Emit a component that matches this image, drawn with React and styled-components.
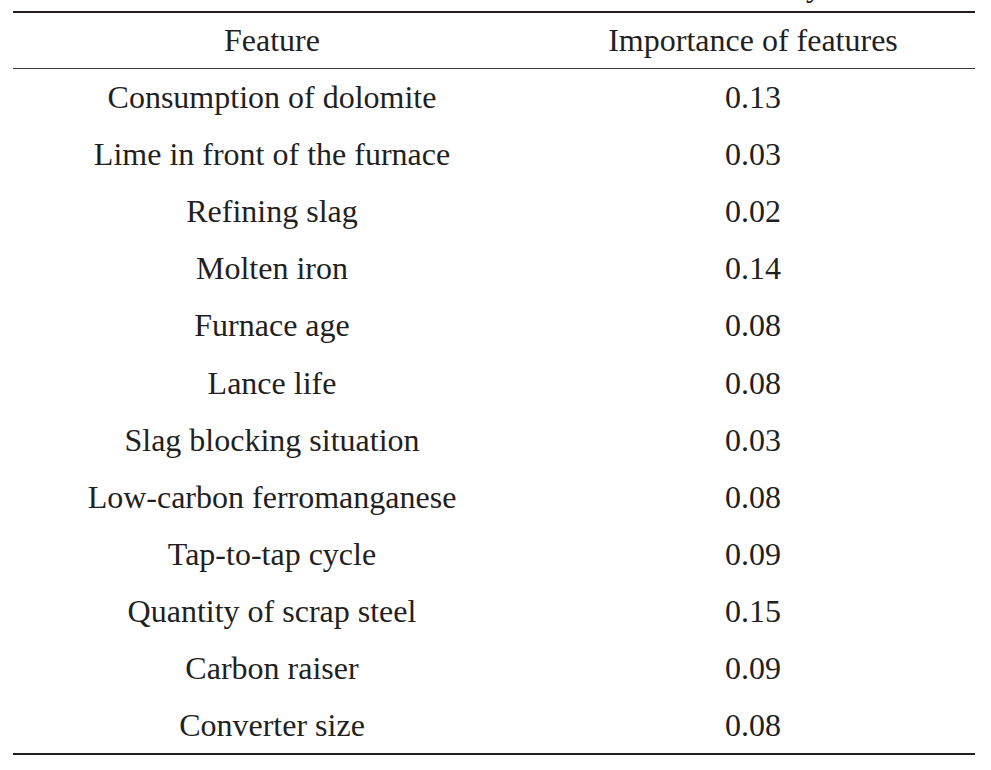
import styled, { createGlobalStyle } from "styled-components";

const GlobalStyle = createGlobalStyle`
  html, body {
    margin: 0;
    padding: 0;
    background: #ffffff;
  }
  body {
    font-family: "Liberation Serif", "Times New Roman", serif;
    color: #231f20;
  }
`;

const Page = styled.div`
  width: 991px;
  padding: 0 16px 0 13px;
  box-sizing: border-box;
`;

// tail of the caption line that sits above the crop
const Caption = styled.div`
  height: 11px;
  overflow: hidden;
`;

const CaptionText = styled.div`
  font-size: 32px;
  line-height: 32px;
  margin-top: -31px;
  padding-left: 793px;
  white-space: nowrap;
`;

const Table = styled.table`
  width: 962px;
  border-collapse: collapse;
  border-top: 2px solid #231f20;
  border-bottom: 2px solid #231f20;
  font-size: 32px;
  table-layout: fixed;
`;

const HeadRow = styled.tr`
  height: 56px;
  border-bottom: 1.5px solid #3a3a3a;
`;

const Row = styled.tr`
  height: 57.2px;
`;

const Cell = styled.td`
  width: ${({ $width }) => $width}px;
  padding: 0;
  text-align: center;
  vertical-align: middle;
  line-height: 1;
  white-space: nowrap;
`;

const HeadCell = styled(Cell).attrs({ as: "th" })`
  font-weight: normal;
`;

const rows = [
  ["Consumption of dolomite", "0.13"],
  ["Lime in front of the furnace", "0.03"],
  ["Refining slag", "0.02"],
  ["Molten iron", "0.14"],
  ["Furnace age", "0.08"],
  ["Lance life", "0.08"],
  ["Slag blocking situation", "0.03"],
  ["Low-carbon ferromanganese", "0.08"],
  ["Tap-to-tap cycle", "0.09"],
  ["Quantity of scrap steel", "0.15"],
  ["Carbon raiser", "0.09"],
  ["Converter size", "0.08"],
];

const App = () => {
  return (
    <Page>
      <GlobalStyle />
      <Caption>
        <CaptionText>y</CaptionText>
      </Caption>
      <Table>
        <thead>
          <HeadRow>
            <HeadCell $width={518}>Feature</HeadCell>
            <HeadCell $width={444}>Importance of features</HeadCell>
          </HeadRow>
        </thead>
        <tbody>
          {rows.map(([name, value]) => (
            <Row key={name}>
              <Cell $width={518}>{name}</Cell>
              <Cell $width={444}>{value}</Cell>
            </Row>
          ))}
        </tbody>
      </Table>
    </Page>
  );
};

export default App;
